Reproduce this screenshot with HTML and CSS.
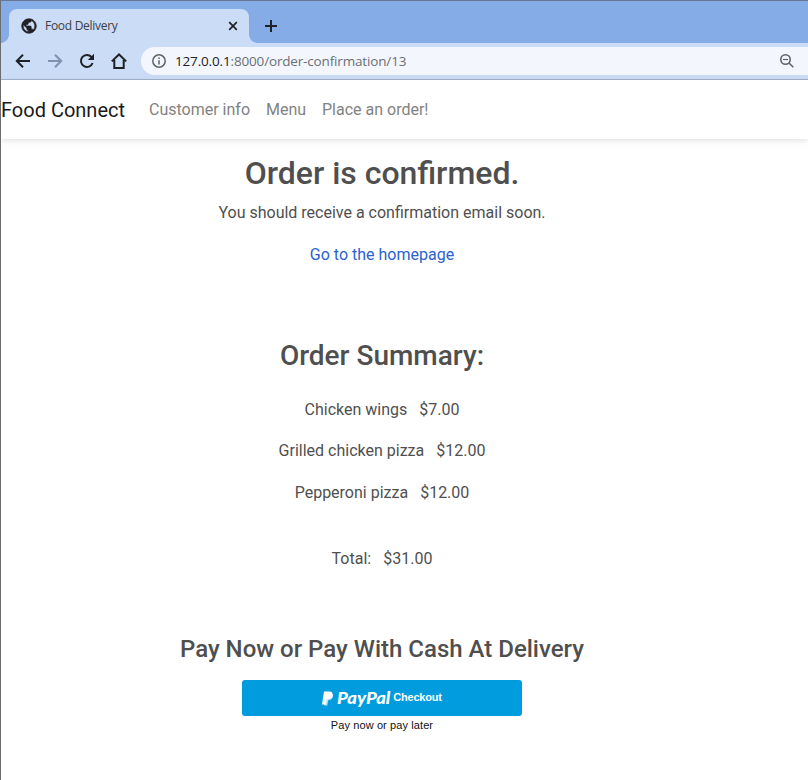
FILE: index.html
```html
<!DOCTYPE html>
<html lang="en">
<head>
<meta charset="utf-8">
<title>Food Delivery</title>
<link rel="stylesheet" href="styles.css">
</head>
<body>
<div class="window">
  <div class="tabstrip">
    <div class="tab">
      <svg class="globe" viewBox="1 1 22 22"><path fill="#202124" d="M12 2C6.480 2 2 6.480 2 12s4.480 10 10 10 10-4.480 10-10S17.520 2 12 2zm-1 17.930c-3.950-.490-7-3.850-7-7.930 0-.620.080-1.210.210-1.790L9 15v1c0 1.100.900 2 2 2v1.930zm6.900-2.540c-.260-.810-1-1.390-1.900-1.390h-1v-3c0-.550-.450-1-1-1H8v-2h2c.550 0 1-.450 1-1V7h2c1.100 0 2-.900 2-2v-.410c2.930 1.190 5 4.060 5 7.410 0 2.080-.800 3.970-2.100 5.390z"/></svg>
      <span class="tab-title">Food Delivery</span>
      <svg class="close" viewBox="0 0 10 10"><path d="M1.200 1.200l7.600 7.600M8.800 1.200 1.200 8.800"/></svg>
    </div>
    <svg class="plus" viewBox="0 0 12 12"><path d="M6 0v12M0 6h12"/></svg>
  </div>
  <div class="toolbar">
    <svg class="nav-icon" viewBox="0 0 16 16"><path d="M15 8H2M8 1.800 1.800 8 8 14.200"/></svg>
    <svg class="nav-icon dim" viewBox="0 0 16 16"><path d="M1 8h13M8 1.800 14.200 8 8 14.200"/></svg>
    <svg class="nav-icon" viewBox="0 0 16 16"><path d="M13.600 10A6 6 0 1 1 12.400 3.900L14 5.500"/><path class="solid" d="M15 .8V7H8.800Z"/></svg>
    <svg class="nav-icon" viewBox="0 0 16 16"><path d="M.8 8.400 8 1.500l7.200 6.900M3.300 7v8h9.400V7"/></svg>
    <div class="address">
      <svg class="info" viewBox="0 0 14 14"><circle cx="7" cy="7" r="6.200"/><path d="M7 6.200v4.200M7 3.500v1.500"/></svg>
      <span class="url"><b>127.0.0.1</b>:8000/order-confirmation/13</span>
      <svg class="zoom" viewBox="0 0 14 14"><circle cx="5.500" cy="5.500" r="4.700"/><path d="m9 9 4.300 4.300"/><path class="thin" d="M3 5.500h5"/></svg>
    </div>
  </div>
  <nav class="navbar">
    <span class="brand">Food Connect</span>
    <span class="link l1">Customer info</span>
    <span class="link l2">Menu</span>
    <span class="link l3">Place an order!</span>
  </nav>
  <main class="content">
    <h1>Order is confirmed.</h1>
    <p class="notice">You should receive a confirmation email soon.</p>
    <a class="home">Go to the homepage</a>
    <h2>Order Summary:</h2>
    <div class="item"><span>Chicken wings</span><span>$7.00</span></div>
    <div class="item"><span>Grilled chicken pizza</span><span>$12.00</span></div>
    <div class="item"><span>Pepperoni pizza</span><span>$12.00</span></div>
    <div class="item total"><span>Total:</span><span>$31.00</span></div>
    <h3>Pay Now or Pay With Cash At Delivery</h3>
    <div class="paypal">
      <svg class="pp" viewBox="0 0 12 15"><path fill="#b9e2f7" d="M4 3h6.600c1.200 2 .2 6-4.400 6.300l-.9 5.200H2.200Z"/><path fill="#fff" d="M2 .5h5.200C10 .5 11 2 10.500 4.500 10 7.200 8.200 8.200 5.500 8.200H4.500L3.600 13.500H0Z"/></svg>
      <span class="wordmark">PayPal</span>
      <span class="checkout">Checkout</span>
    </div>
    <div class="tagline">Pay now or pay later</div>
  </main>
</div>
</body>
</html>
```
FILE: styles.css
```css
* { box-sizing: border-box; }
body { margin: 0; background: #fff; font-family: Roboto, sans-serif; color: #4f4f4f; }
svg { display: block; flex: none; fill: none; stroke: #202124; }
.window { height: 780px; overflow: hidden; border-left: 1px solid #6b6c70; border-top: 1px solid #687796; }
.tabstrip { display: flex; height: 42px; padding: 8px 0 0 8px; background: #86ace8; }
.tab { position: relative; display: flex; align-items: center; width: 240px; height: 34px; padding: 0 11px 0 12px; border-radius: 8px 8px 0 0; background: #cbdcf6; }
.tab::before, .tab::after { content: ""; position: absolute; bottom: 0; width: 8px; height: 8px; }
.tab::before { left: -8px; background: radial-gradient(circle at 0 0, transparent 7.500px, #cbdcf6 8px); }
.tab::after { right: -8px; background: radial-gradient(circle at 100% 0, transparent 7.500px, #cbdcf6 8px); }
.globe { width: 16px; height: 16px; stroke-width: .9; }
.tab-title { margin: -1px 0 0 8px; font: 12px "Open Sans", sans-serif; color: #3c4043; letter-spacing: -.28px; white-space: nowrap; }
.close { width: 10px; height: 10px; margin-left: auto; stroke-width: 1.700; }
.plus { width: 12px; height: 12px; margin: 11px 0 0 16px; stroke-width: 2; }
.toolbar { display: flex; align-items: center; gap: 16px; height: 37px; padding-left: 14px; background: #cbdcf6; border-bottom: 1px solid #a1b0c8; }
.nav-icon { width: 16px; height: 16px; stroke-width: 2; }
.nav-icon .solid { fill: #202124; stroke: none; }
.dim { stroke: #8091b0; }
.address { display: flex; align-items: center; flex: 1; height: 28px; margin-left: -2px; padding: 0 14px 0 11px; border-radius: 14px 0 0 14px; background: #f3f7fd; }
.info { width: 14px; height: 14px; stroke: #5f6368; stroke-width: 1.500; }
.url { margin: -1px 0 0 9px; font: 13.500px "Open Sans", sans-serif; color: #6b6f75; letter-spacing: -.16px; white-space: nowrap; }
.url b { font-weight: 400; color: #202124; }
.zoom { width: 14px; height: 14px; margin-left: auto; stroke: #5f6368; stroke-width: 1.600; }
.zoom .thin { stroke-width: 1.200; }
.navbar { position: relative; display: flex; align-items: center; height: 59px; background: #fff; box-shadow: 0 2px 10px rgba(0,0,0,.06), 0 2px 4px rgba(0,0,0,.06); white-space: nowrap; }
.brand { width: 148px; font-size: 20px; color: #1a1a1a; }
.l1 { width: 117px; }
.l2 { width: 56px; }
.navbar .link { color: #828282; }
.content { display: flex; flex-direction: column; align-items: center; width: 762px; padding-top: 15px; font-size: 16px; line-height: 24px; }
h1, h2, h3, p { margin: 0; font-weight: 500; white-space: nowrap; }
h1 { font-size: 32px; line-height: 38px; }
.notice { margin-top: 9px; font-weight: 400; }
.home { margin-top: 18px; color: #2b62cf; }
h2 { margin-top: 72px; font-size: 28px; line-height: 34px; }
.item { display: flex; gap: 12px; margin-top: 17.500px; }
h2 + .item { margin-top: 25px; }
.item:nth-of-type(2) { margin-top: 17px; }
.item:nth-of-type(3) { margin-top: 18px; }
.total { margin-top: 42px; }
h3 { margin-top: 64px; font-size: 24px; line-height: 29px; }
.paypal { display: flex; align-items: center; justify-content: center; width: 280px; height: 36px; margin-top: 16px; border-radius: 3px; background: #009cde; color: #fff; }
.pp { width: 12px; height: 15px; stroke: none; }
.wordmark { width: 54px; margin: -1px 0 0 3px; font: italic 900 16px Lato, sans-serif; transform: scaleX(1.15); transform-origin: left center; }
.checkout { margin: -2px 0 0 2px; font: bold 11px "Liberation Sans", sans-serif; letter-spacing: -.2px; }
.tagline { margin-top: 2px; font: 11px/14px "Liberation Sans", sans-serif; color: #111; letter-spacing: .1px; }
```
